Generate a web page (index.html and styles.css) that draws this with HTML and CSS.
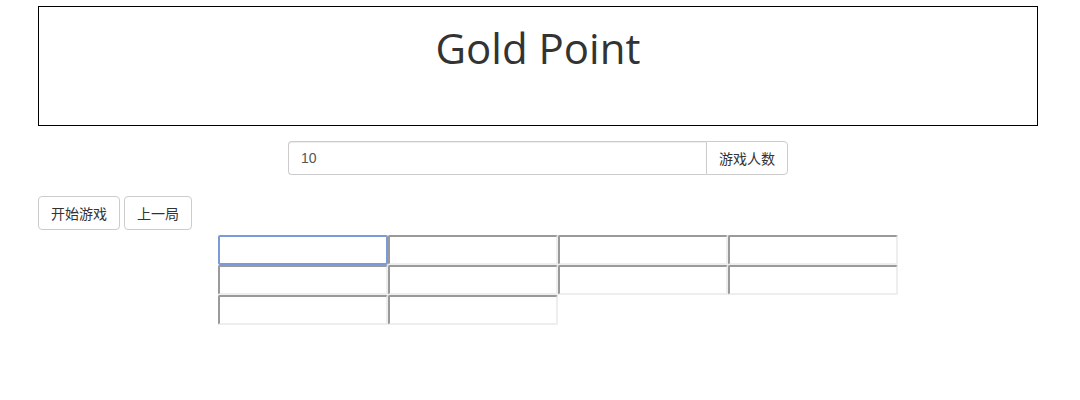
FILE: index.html
```html
<!DOCTYPE html>
<html lang="zh">
<head>
<meta charset="utf-8">
<title>Gold Point</title>
<link rel="stylesheet" href="styles.css">
</head>
<body>
<div class="page">
  <div class="header">
    <h1 class="title">Gold Point</h1>
  </div>
  <div class="players">
    <div class="input-group">
      <input class="form-control" type="text" value="10">
      <span class="addon">游戏人数</span>
    </div>
  </div>
  <div class="actions">
    <button class="btn">开始游戏</button>
    <button class="btn">上一局</button>
  </div>
  <div class="grid">
    <input class="cell focused" type="text">
    <input class="cell" type="text">
    <input class="cell" type="text">
    <input class="cell" type="text">
    <input class="cell" type="text">
    <input class="cell" type="text">
    <input class="cell" type="text">
    <input class="cell" type="text">
    <input class="cell" type="text">
    <input class="cell" type="text">
  </div>
</div>
</body>
</html>
```

FILE: styles.css
```css
* { box-sizing: border-box; }
html, body {
  margin: 0;
  padding: 0;
  background: #fff;
  font-family: "Open Sans", "Noto Sans CJK SC", sans-serif;
  font-size: 14px;
  color: #333;
}
.page {
  padding: 6px 0 0 38px;
  width: 1038px;
}
.header {
  width: 1000px;
  height: 120px;
  border: 1px solid #000;
}
.title {
  margin: 0;
  padding-top: 15px;
  text-align: center;
  font-family: "Open Sans", sans-serif;
  font-weight: 400;
  font-size: 42px;
  line-height: 52px;
  color: #333;
}
.players {
  display: flex;
  justify-content: center;
  margin-top: 15px;
}
.input-group {
  display: flex;
  width: 500px;
  height: 34px;
}
.form-control {
  flex: 1;
  height: 34px;
  padding: 6px 12px;
  border: 1px solid #ccc;
  border-right: none;
  border-radius: 4px 0 0 4px;
  font-family: "Liberation Sans", "Noto Sans CJK SC", sans-serif;
  font-size: 14px;
  color: #555;
  box-shadow: inset 0 1px 1px rgba(0,0,0,.075);
  outline: none;
}
.addon {
  display: flex;
  align-items: center;
  justify-content: center;
  width: 82px;
  height: 34px;
  border: 1px solid #ccc;
  border-radius: 0 4px 4px 0;
  background: #fff;
  font-family: "Noto Sans CJK SC", sans-serif;
  font-size: 14px;
  color: #333;
}
.actions {
  display: flex;
  gap: 4px;
  margin-top: 21px;
}
.btn {
  height: 34px;
  padding: 0 12px;
  border: 1px solid #ccc;
  border-radius: 4px;
  background: #fff;
  font-family: "Noto Sans CJK SC", sans-serif;
  font-size: 14px;
  color: #333;
}
.grid {
  display: grid;
  grid-template-columns: repeat(4, 170px);
  grid-auto-rows: 30px;
  margin: 5px 0 0 180px;
  width: 680px;
}
.cell {
  width: 170px;
  height: 30px;
  margin: 0;
  padding: 1px 2px;
  border-style: solid;
  border-width: 2px;
  border-color: #9a9a9a #eeeeee #eeeeee #9a9a9a;
  border-radius: 2px;
  background: #fff;
  outline: none;
}
.cell.focused {
  border: 2px solid #7b9bd8;
  border-radius: 2px;
}
```
